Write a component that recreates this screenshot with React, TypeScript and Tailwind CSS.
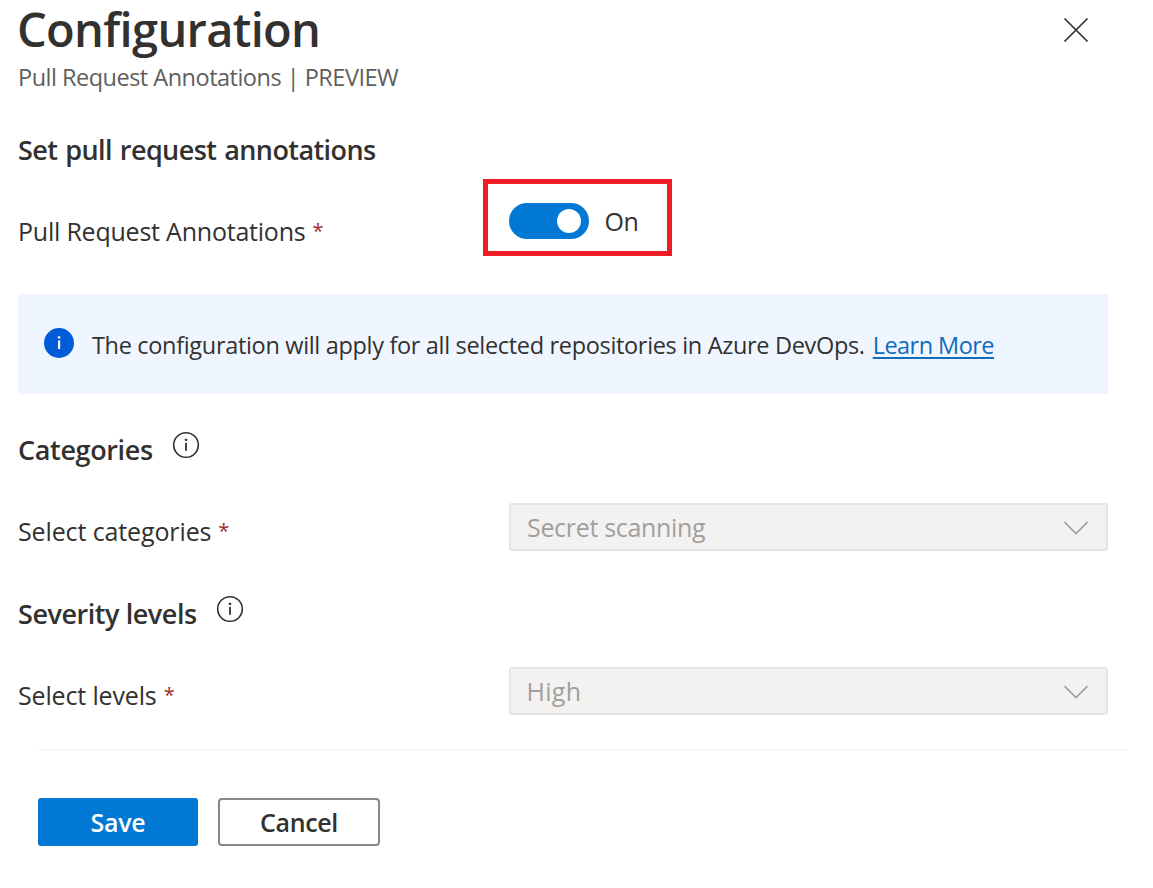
import type { ReactNode } from "react";

function InfoIcon() {
  return (
    <svg width="28" height="28" viewBox="0 0 28 28" fill="none" aria-hidden="true">
      <circle cx="14" cy="14" r="12.3" stroke="#323130" strokeWidth="1.6" />
      <rect x="13.1" y="11.8" width="1.8" height="8" fill="#323130" />
      <rect x="12.9" y="7.8" width="2.2" height="2.1" rx="0.5" fill="#323130" />
    </svg>
  );
}

function SelectBox({ children }: { children: ReactNode }) {
  return (
    <button
      disabled
      className="flex h-12 w-[599px] items-center justify-between rounded-[3px] border-2 border-[#e5e5e6] bg-[#f3f2f1] pr-[18px] pl-[16px] text-[25px] leading-[44px] text-[#a19f9d]"
    >
      {children}
      <svg className="mt-[2px]" width="24" height="14" viewBox="0 0 24 14" fill="none" aria-hidden="true">
        <path d="M0.5 1L12 12.5L23.5 1" stroke="#a19f9d" strokeWidth="1.6" />
      </svg>
    </button>
  );
}

function Required() {
  return <span className="ml-[7px] align-[3px] text-[20px] leading-none tracking-normal text-[#a4262c]">*</span>;
}

export default function App() {
  return (
    <main className="h-[888px] w-[1153px] overflow-hidden bg-white font-['Open_Sans','Noto_Sans',sans-serif] text-[#323130]">
      <header className="flex h-[100px] justify-between pr-[64px] pl-[18px]">
        <div>
          <h1 className="-ml-px h-[54px] text-[47px] leading-[58px] font-semibold tracking-[-0.68px]">Configuration</h1>
          <p className="text-[23.5px] leading-[46px] tracking-[-0.504px] text-[#605e5c]">
            Pull Request Annotations | PREVIEW
          </p>
        </div>
        <button aria-label="Close" className="mt-[17px] h-[26px] w-[26px]">
          <svg width="26" height="26" viewBox="0 0 26 26" fill="none">
            <path d="M1.5 1.5L24.5 24.5M24.5 1.5L1.5 24.5" stroke="#323130" strokeWidth="1.7" />
          </svg>
        </button>
      </header>

      <section className="pr-[45px] pl-[18px]">
        <h2 className="mt-[30px] text-[27px] leading-[40px] font-semibold tracking-[-0.586px] [word-spacing:1.5px]">
          Set pull request annotations
        </h2>
        <div className="mt-[9px] flex h-[77px]">
          <div className="w-[465px] pt-[32px] text-[25px] leading-[40px] tracking-[-0.22px]">
            Pull Request Annotations
            <Required />
          </div>
          <div className="flex h-[77px] w-[189px] items-center border-5 border-[#ee1c25] pl-[21px]">
            <button role="switch" aria-checked="true" aria-label="Pull Request Annotations" className="mt-[7px] flex h-9 w-20 items-center justify-end rounded-full bg-[#0078d4] pr-2">
              <span className="size-6 rounded-full bg-white" />
            </button>
            <span className="mt-[6px] ml-[15.5px] text-[25px] leading-[40px] tracking-[-0.446px]">On</span>
          </div>
        </div>

        <div className="mt-[38px] flex h-[100px] bg-[#eff6ff] pl-[25px]">
          <svg className="mt-[33px]" width="32" height="32" viewBox="0 0 32 32" aria-hidden="true">
            <circle cx="16" cy="16" r="15" fill="#015cda" />
            <rect x="15" y="13.5" width="2.2" height="8.5" fill="white" />
            <rect x="14.8" y="9.3" width="2.5" height="2.3" rx="0.6" fill="white" />
          </svg>
          <p className="mt-[26px] ml-[17px] text-[23.5px] leading-[50px] tracking-[-0.325px] whitespace-nowrap">
            The configuration will apply for all selected repositories in Azure DevOps.
          </p>
          <a className="mt-[26px] ml-[8px] text-[23.5px] leading-[50px] tracking-[-0.55px] text-[#0f6cbd] underline decoration-2 underline-offset-[3px]">
            Learn More
          </a>
        </div>

        <div className="mt-[36px] flex h-10">
          <h2 className="w-[154px] text-[27px] leading-[40px] font-semibold tracking-[-0.355px]">Categories</h2>
          <div className="mt-px"><InfoIcon /></div>
        </div>
        <div className="mt-[33px] flex h-12">
          <div className="w-[491px] pt-[8px] text-[25px] leading-[40px] tracking-[-0.12px]">
            Select categories
            <Required />
          </div>
          <SelectBox><span className="tracking-[-0.319px]">Secret scanning</span></SelectBox>
        </div>

        <div className="mt-[43px] flex h-10">
          <h2 className="w-[198px] text-[27px] leading-[40px] font-semibold tracking-[-0.45px]">Severity levels</h2>
          <div className="mt-px"><InfoIcon /></div>
        </div>
        <div className="mt-[33px] flex h-12">
          <div className="w-[491px] pt-[8px] text-[25px] leading-[40px] tracking-[-0.15px]">
            Select levels
            <Required />
          </div>
          <SelectBox><span className="-ml-[0.5px] tracking-[0.3px]">High</span></SelectBox>
        </div>
      </section>

      <footer className="mt-[34px] mr-[25px] ml-[38px] flex gap-5 border-t-2 border-[#f7f7f7] pt-[47px]">
        <button className="h-12 w-40 rounded-[3px] bg-[#0078d4] text-[25px] leading-[48px] font-semibold tracking-[-0.25px] text-white">
          Save
        </button>
        <button className="h-12 w-[162px] rounded-[4px] border-2 border-[#8a8886] bg-white text-[25px] leading-[44px] font-semibold tracking-[-0.35px]">
          Cancel
        </button>
      </footer>
    </main>
  );
}
